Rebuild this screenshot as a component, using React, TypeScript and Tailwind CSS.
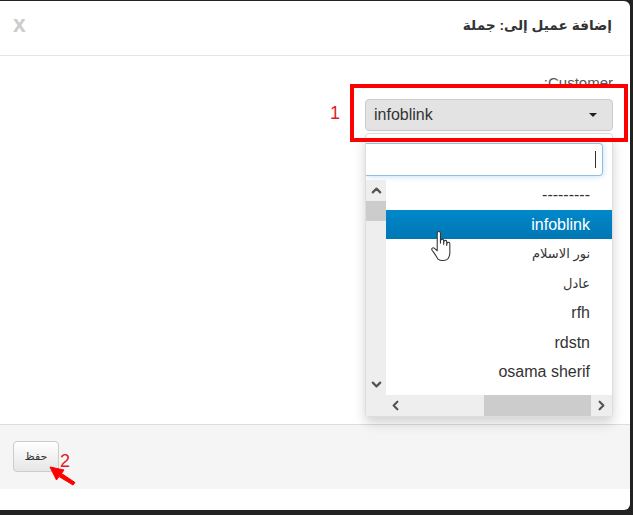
import { ChevronDown, ChevronLeft, ChevronRight, ChevronUp } from "lucide-react";

const options = ["---------", "infoblink", "نور الاسلام", "عادل", "rfh", "rdstn", "osama sherif"];

function HandCursor() {
  return (
    <svg width="23" height="31" viewBox="1 1.500 20 29" className="absolute top-[230px] left-[430px]">
      <path
        d="M7 3.500c0-2 3-2 3 0V13l.2-2.600c0-1.700 2.800-1.700 2.800 0V14l.2-2.600c.2-1.600 2.700-1.400 2.700.2V15l.3-2c.3-1.500 2.600-1.200 2.600.4V22c0 2-.6 3.500-1.400 5 -1.500 2.500-7 3-10 .5C6 24.500 4 22 2.200 19.500c-1-1.500.7-3.200 2.300-1.800L7 20z"
        fill="#fff"
        stroke="#333"
        strokeWidth="1"
        strokeLinejoin="round"
      />
    </svg>
  );
}

export default function App() {
  return (
    <div className="h-[515px] w-[633px] overflow-hidden bg-[#222] pt-[1px] font-['Liberation_Sans',_'DejaVu_Sans',_sans-serif] text-[#333]">
      <div className="relative h-[509px] w-[630px] rounded-tr-md rounded-br-md bg-white">
        <div className="flex h-[55px] items-center justify-between border-b border-[#e5e5e5] pr-[18px] pl-[13px]">
          <span className="-mt-[8px] text-[23px] leading-none font-bold text-[#ccc]">x</span>
          <h3 dir="rtl" className="-mt-[3px] text-[13.700px] font-bold text-[#333]">إضافة عميل إلى: جملة</h3>
        </div>

        <div className="flex h-[368px] flex-col items-end pt-[17px] pr-[17px]">
          <label className="mb-[6px] h-[20px] text-[15px] leading-[20px] text-[#555]">:Customer</label>
          <div className="flex h-[32px] w-[248px] items-center justify-between rounded border border-[#ccc] bg-[#e3e3e3] pr-[15px] pl-[8px] text-[16px]">
            <span>infoblink</span>
            <span className="h-0 w-0 border-x-[4px] border-t-[4px] border-x-transparent border-t-[#222]"></span>
          </div>

          <div className="mt-[2px] w-[248px] overflow-hidden rounded border border-[#ddd] bg-white shadow-[0_6px_12px_rgba(0,0,0,0.175)]">
            <div className="pt-[9px] pr-[9px]">
              <div className="flex h-[33px] items-center justify-end rounded-r border border-l-0 border-[#8fbfe3] pr-[6px] shadow-[0_0_6px_rgba(102,175,233,0.45)]">
                <span className="h-[17px] w-[1px] bg-[#333]"></span>
              </div>
            </div>
            <div className="mt-[4px] flex h-[215px]">
              <div className="flex w-[20px] flex-col items-center bg-[#eee]">
                <div className="flex h-[21px] items-center justify-center">
                  <ChevronUp size={15} strokeWidth={3.500} className="text-[#555]" />
                </div>
                <div className="h-[20px] w-full bg-[#ccc]"></div>
                <div className="mt-auto flex h-[21px] items-center justify-center">
                  <ChevronDown size={15} strokeWidth={3.500} className="text-[#555]" />
                </div>
              </div>
              <ul dir="rtl" className="flex-1 text-[16px] leading-[29.500px]">
                {options.map((o) => (
                  <li
                    key={o}
                    className={
                      o === "infoblink"
                        ? "bg-gradient-to-b from-[#0088cc] to-[#0077b3] pr-[22px] text-white"
                        : /[a-z-]/.test(o)
                          ? "pr-[22px] text-[#333]"
                          : "pr-[22px] text-[13px] text-[#333]"
                    }
                  >
                    <span dir="auto">{o}</span>
                  </li>
                ))}
              </ul>
            </div>
            <div className="flex h-[21px] items-center bg-[#eee] pl-[20px]">
              <div className="flex w-[19px] justify-center">
                <ChevronLeft size={15} strokeWidth={3.500} className="text-[#555]" />
              </div>
              <div className="ml-[79px] h-full w-[107px] bg-[#ccc]"></div>
              <div className="flex flex-1 justify-center">
                <ChevronRight size={15} strokeWidth={3.500} className="text-[#555]" />
              </div>
            </div>
          </div>
        </div>

        <div className="h-[65px] border-t border-[#ddd] bg-[#f5f5f5] pt-[16px] pl-[13px]">
          <button className="h-[31px] w-[46px] rounded border border-[#ccc] bg-gradient-to-b from-white to-[#e6e6e6] text-[11px] text-[#333]">
            حفظ
          </button>
        </div>

        {/* annotations drawn over the screenshot */}
        <div className="absolute top-[83px] left-[350px] h-[58px] w-[278px] border-[4px] border-[#f00]"></div>
        <span className="absolute top-[102px] left-[330px] text-[18px] leading-[20px] text-[#e01b24]">1</span>
        <span className="absolute top-[450px] left-[60px] text-[18px] leading-[20px] text-[#e01b24]">2</span>
        <svg width="30" height="24" viewBox="0 0 30 24" className="absolute top-[464px] left-[48px]">
          <path d="M2 2 L16 5 L13.500 8.500 L27 17.500 L25 20 L11 11.500 L8.500 15 Z" fill="#f00" stroke="#f00" strokeLinejoin="round" />
        </svg>
        <HandCursor />
      </div>
    </div>
  );
}
